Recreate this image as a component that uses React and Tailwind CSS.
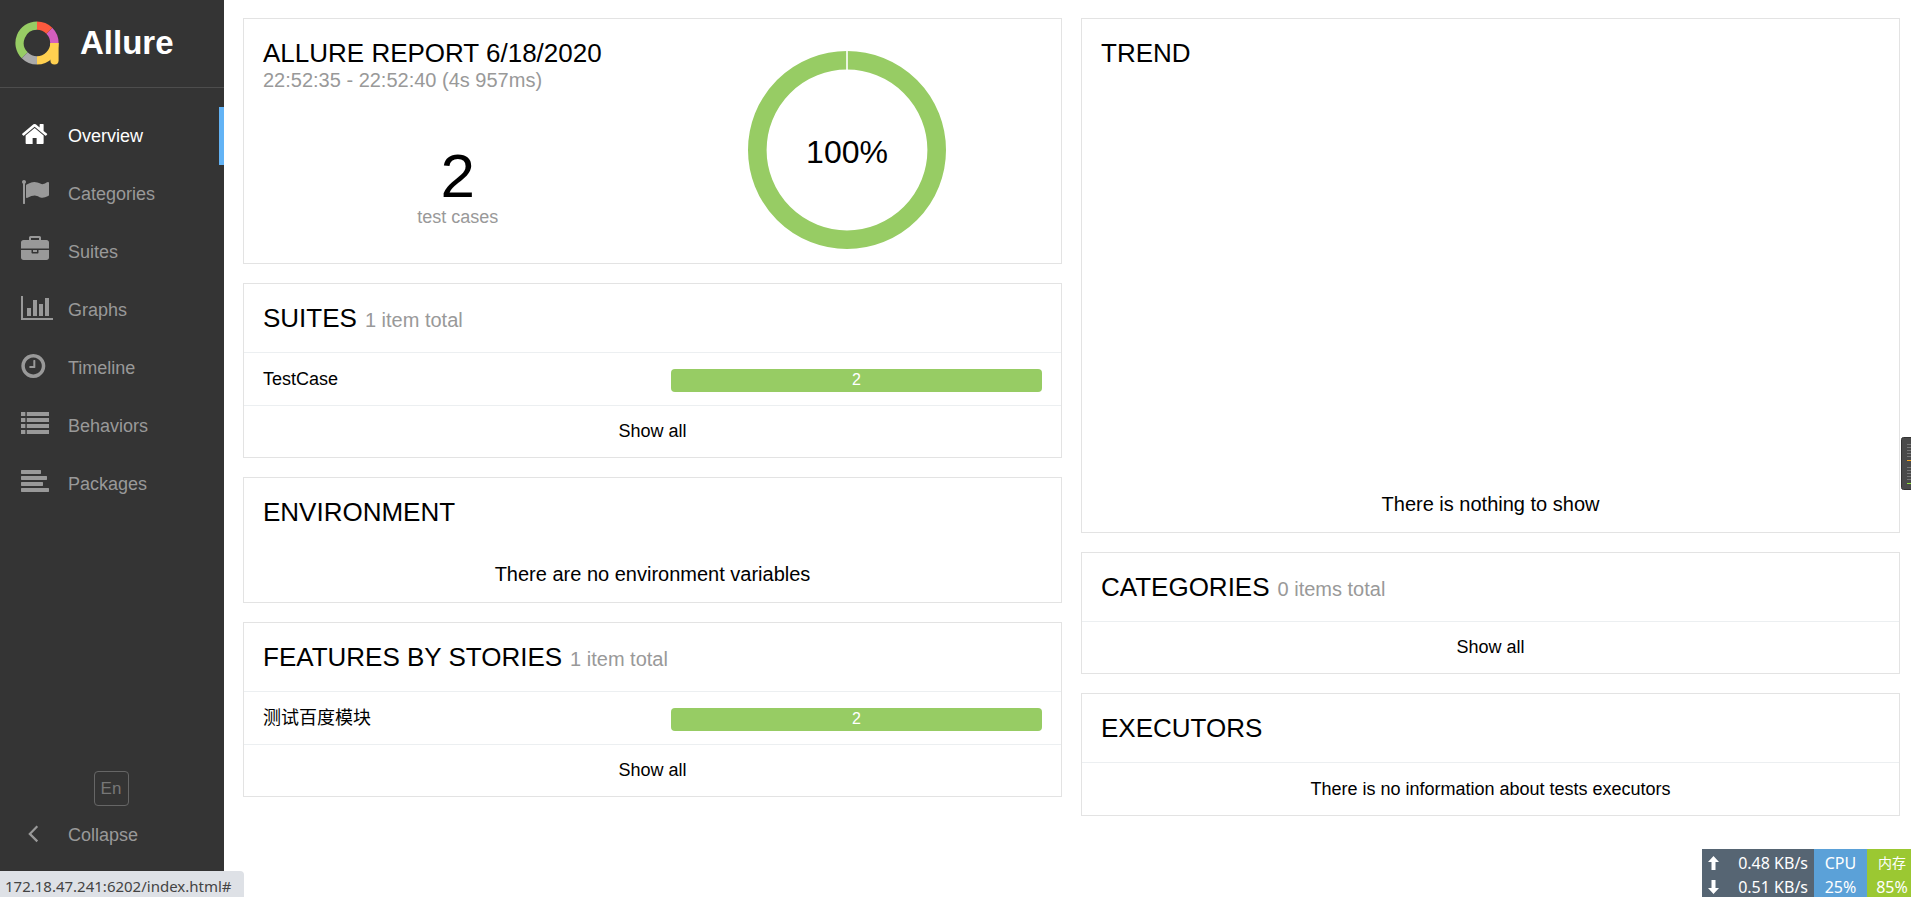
// src/App.jsx
const FONT = "font-['Liberation_Sans','Noto_Sans_CJK_SC',sans-serif]";

// name, viewBox and path of each sidebar entry
const NAV_ITEMS = [
    {
        name: 'Overview',
        active: true,
        viewBox: '24 0 1792 1792',
        path: 'M1472 992v480q0 26-19 45t-45 19h-384v-384h-256v384h-384q-26 0-45-19t-19-45v-480q0-1 .5-3t.5-3l575-474 575 474q1 2 1 6zm223-69l-62 74q-8 9-21 11h-3q-13 0-21-7l-692-577-692 577q-12 8-24 7-13-2-21-11l-62-74q-8-10-7-23.5t11-21.5l719-599q32-26 76-26t76 26l244 204v-195q0-14 9-23t23-9h192q14 0 23 9t9 23v408l219 182q10 8 11 21.5t-7 23.5z',
    },
    {
        name: 'Categories',
        viewBox: '0 0 1792 1792',
        path: 'M320 256q0 72-64 110v1266q0 13-9.5 22.5t-22.5 9.5h-64q-13 0-22.5-9.5t-9.5-22.5v-1266q-64-38-64-110 0-53 37.5-90.5t90.5-37.5 90.5 37.5 37.5 90.5zm1472 64v763q0 25-12.5 38.5t-39.5 27.5q-215 116-369 116-61 0-123.5-22t-108.5-48-115.5-48-142.5-22q-192 0-464 146-17 9-33 9-26 0-45-19t-19-45v-742q0-32 31-55 21-14 79-43 236-120 421-120 107 0 200 29t219 88q38 19 88 19 54 0 117.5-21t110-47 88-47 54.5-21q26 0 45 19t19 45z',
    },
    {
        name: 'Suites',
        viewBox: '0 0 1792 1792',
        path: 'M640 256h512v-128h-512v128zm1152 640v480q0 66-47 113t-113 47h-1472q-66 0-113-47t-47-113v-480h672v160q0 26 19 45t45 19h320q26 0 45-19t19-45v-160h672zm-768 0v128h-256v-128h256zm768-480v384h-1792v-384q0-66 47-113t113-47h352v-160q0-40 28-68t68-28h576q40 0 68 28t28 68v160h352q66 0 113 47t47 113z',
    },
    {
        name: 'Graphs',
        viewBox: '0 0 1792 1792',
        path: 'M640 896v512h-256v-512h256zm384-512v1024h-256v-1024h256zm1024 1152v128h-2048v-1536h128v1408h1920zm-640-896v768h-256v-768h256zm384-384v1152h-256v-1152h256z',
    },
    {
        name: 'Timeline',
        viewBox: '108 0 1792 1792',
        path: 'M1024 544v448q0 14-9 23t-23 9h-320q-14 0-23-9t-9-23v-64q0-14 9-23t23-9h224v-352q0-14 9-23t23-9h64q14 0 23 9t9 23zm416 352q0-148-73-273t-198-198-273-73-273 73-198 198-73 273 73 273 198 198 273 73 273-73 198-198 73-273zm224 0q0 209-103 385.5t-279.5 279.5-385.5 103-385.5-103-279.5-279.5-103-385.5 103-385.5 279.5-279.5 385.5-103 385.5 103 279.5 279.5 103 385.5z',
    },
    {
        name: 'Behaviors',
        viewBox: '0 0 1792 1792',
        path: 'M0 128h280v256h-280zM370 128h1422v256h-1422zM0 512h280v256h-280zM370 512h1422v256h-1422zM0 896h280v256h-280zM370 896h1422v256h-1422zM0 1280h280v256h-280zM370 1280h1422v256h-1422z',
    },
    {
        name: 'Packages',
        viewBox: '0 0 1792 1792',
        path: 'M32 128h1216l32 32v192l-32 32h-1216l-32-32v-192zM32 512h1600l32 32v192l-32 32h-1600l-32-32v-192zM32 896h1344l32 32v192l-32 32h-1344l-32-32v-192zM32 1280h1728l32 32v192l-32 32h-1728l-32-32v-192z',
    },
];

function Logo() {
    return (
        <svg className="w-11 h-11 shrink-0" viewBox="0 0 44 44" fill="none" strokeWidth="8.4">
            <path d="M22 4.6A17.4 17.4 0 0 0 9.7 34.3" stroke="#97cc64" />
            <path d="M9.7 34.3A17.4 17.4 0 0 0 22 39.4" stroke="#aaaaaa" />
            <path d="M22 39.4A17.4 17.4 0 0 0 39.4 22" stroke="#ffd050" />
            <path d="M34.3 9.7A17.4 17.4 0 0 1 39.4 22" stroke="#d35ebe" />
            <path d="M22 4.6A17.4 17.4 0 0 1 34.3 9.7" stroke="#fd5a3e" />
            <path d="M35.4 22h8.2v17.4a4.1 4.1 0 0 1-8.2 0z" fill="#ffd050" stroke="none" />
        </svg>
    );
}

function Sidebar() {
    return (
        <aside className="w-56 shrink-0 bg-[#343434] text-[#999] text-[18px] flex flex-col pb-[33px]">
            <a href="#" className="h-[88px] border-b border-[#4d4d4d] flex items-center gap-[21px] pl-[15px] pb-0.5 text-white">
                <Logo />
                <span className="text-[33px] leading-9 font-bold">Allure</span>
            </a>

            <nav className="pt-[19px]">
                {NAV_ITEMS.map((item) => (
                    <a
                        key={item.name}
                        href="#"
                        className={`h-[58px] flex items-center gap-[19px] pl-[21px] ${
                            item.active ? 'text-white border-r-[5px] border-[#63b3f5]' : 'hover:text-white'
                        }`}
                    >
                        <svg className="w-7 h-7 mb-1 shrink-0 overflow-visible" viewBox={item.viewBox} fill="currentColor">
                            <path d={item.path} />
                        </svg>
                        <span>{item.name}</span>
                    </a>
                ))}
            </nav>

            {/* Language and collapse */}
            <div className="mt-auto flex justify-center pr-0.5">
                <button className="w-[35px] h-[35px] border border-[#666] rounded text-[#777] text-[17px]">En</button>
            </div>
            <button className="h-[58px] flex items-center gap-[19px] pl-[21px] text-left hover:text-white">
                <svg className="w-7 h-7 mb-1 shrink-0" viewBox="0 0 28 28" fill="none" stroke="currentColor" strokeWidth="2.2">
                    <path d="M16.3 7.2L8.8 14.9l7.5 7.5" />
                </svg>
                <span>Collapse</span>
            </button>
        </aside>
    );
}

function Card({ title, subtitle, children }) {
    return (
        <section className="border border-[#e3e3e3]">
            <h2 className="p-[19px] text-[26px] leading-[30px] uppercase">
                {title}
                {subtitle && <span className="ml-2 text-xl leading-none text-[#999] normal-case">{subtitle}</span>}
            </h2>
            {children}
        </section>
    );
}

function StatusRow({ name, count }) {
    return (
        <a href="#" className="h-[53px] border-t border-[#eceff1] px-[19px] grid grid-cols-[11fr_10fr] items-center">
            <span>{name}</span>
            <span className="h-[23px] mt-0.5 rounded bg-[#97cc64] text-white text-base leading-[22px] text-center">{count}</span>
        </a>
    );
}

function ShowAll() {
    return (
        <a href="#" className="h-[52px] border-t border-[#eceff1] flex items-center justify-center">
            Show all
        </a>
    );
}

function Summary() {
    return (
        <section className="border border-[#e3e3e3] px-[19px] grid grid-cols-2">
            <div className="pt-[19px]">
                <h2 className="text-[26px] leading-[30px] uppercase whitespace-nowrap">Allure Report 6/18/2020</h2>
                <div className="text-xl leading-[25px] text-[#999]">22:52:35 - 22:52:40 (4s 957ms)</div>
                <div className="mt-[52px] text-center">
                    <div className="text-[62px] leading-[62px]">2</div>
                    <div className="leading-5 text-[#999]">test cases</div>
                </div>
            </div>
            <div className="pt-8 pb-[14px] flex justify-center">
                <svg className="w-[198px] h-[198px]" viewBox="0 0 198 198">
                    <circle cx="99" cy="99" r="89.7" fill="none" stroke="#97cc64" strokeWidth="18.6" />
                    <path d="M99 0v19" stroke="#fff" strokeWidth="1.6" />
                    <text x="99" y="112" textAnchor="middle" className="text-[32px]">100%</text>
                </svg>
            </div>
        </section>
    );
}

function NetworkMonitor() {
    return (
        <div className="fixed right-0 bottom-0 h-12 flex text-white text-base leading-6 overflow-hidden font-['Noto_Sans','Noto_Sans_CJK_SC',sans-serif]">
            <div className="w-28 bg-[#566573] px-1.5 pt-0.5">
                <div className="flex items-center justify-between">
                    <svg className="w-[11px] h-[14px]" viewBox="0 0 11 14" fill="currentColor"><path d="M5.5 0L11 6H7.5V14H3.5V6H0z" /></svg>
                    <span>0.48 KB/s</span>
                </div>
                <div className="flex items-center justify-between">
                    <svg className="w-[11px] h-[14px]" viewBox="0 0 11 14" fill="currentColor"><path d="M5.5 14L0 8H3.5V0H7.5V8H11z" /></svg>
                    <span>0.51 KB/s</span>
                </div>
            </div>
            <div className="w-[53px] bg-[#5ba1d8] text-center pt-0.5">
                <div>CPU</div>
                <div>25%</div>
            </div>
            <div className="w-11 bg-[#9bc832] text-center pt-0.5 pl-1.5 whitespace-nowrap">
                <div className="text-sm leading-6">内存</div>
                <div>85%</div>
            </div>
        </div>
    );
}

// Docked desktop gadget at the right edge
function EdgeGadget() {
    return (
        <svg className="fixed right-0 top-[437px] w-2.5 h-[53px]" viewBox="0 0 10 53">
            <rect x="0.5" y="0.5" width="14" height="52" rx="2" fill="#4a4a4a" stroke="#333" />
            <path d="M6 7.5h4M6 10.5h4M6 13.5h4M6 16.5h4M6 19.5h4M6 30.5h4M6 33.5h4M6 36.5h4M6 39.5h4M6 42.5h4" stroke="#777" />
            <path d="M6 23.5h4" stroke="#f5a623" />
            <path d="M6 46.5h4" stroke="#8fe03a" />
        </svg>
    );
}

function App() {
    return (
        <div className={`min-h-screen flex bg-white text-black text-[18px] ${FONT}`}>
            <Sidebar />

            <main className="flex-1 grid grid-cols-2 items-start gap-[19px] pt-[18px] pl-[19px] pr-[11px]">
                <div className="flex flex-col gap-[19px]">
                    <Summary />
                    <Card title="Suites" subtitle="1 item total">
                        <StatusRow name="TestCase" count={2} />
                        <ShowAll />
                    </Card>
                    <Card title="Environment">
                        <p className="py-4 text-xl leading-6 text-center">There are no environment variables</p>
                    </Card>
                    <Card title="Features by stories" subtitle="1 item total">
                        <StatusRow name="测试百度模块" count={2} />
                        <ShowAll />
                    </Card>
                </div>

                <div className="flex flex-col gap-[19px]">
                    <Card title="Trend">
                        <p className="pt-[405px] pb-4 text-xl leading-6 text-center">There is nothing to show</p>
                    </Card>
                    <Card title="Categories" subtitle="0 items total">
                        <ShowAll />
                    </Card>
                    <Card title="Executors">
                        <p className="h-[53px] border-t border-[#eceff1] flex items-center justify-center">
                            There is no information about tests executors
                        </p>
                    </Card>
                </div>
            </main>

            <div className="fixed left-0 bottom-0 h-[26px] pl-[5px] pr-3 rounded-tr bg-[#dee1e6] text-[#444] text-[15px] leading-[30px] font-['Noto_Sans',sans-serif] overflow-hidden">
                172.18.47.241:6202/index.html#
            </div>
            <NetworkMonitor />
            <EdgeGadget />
        </div>
    );
}

export default App;
